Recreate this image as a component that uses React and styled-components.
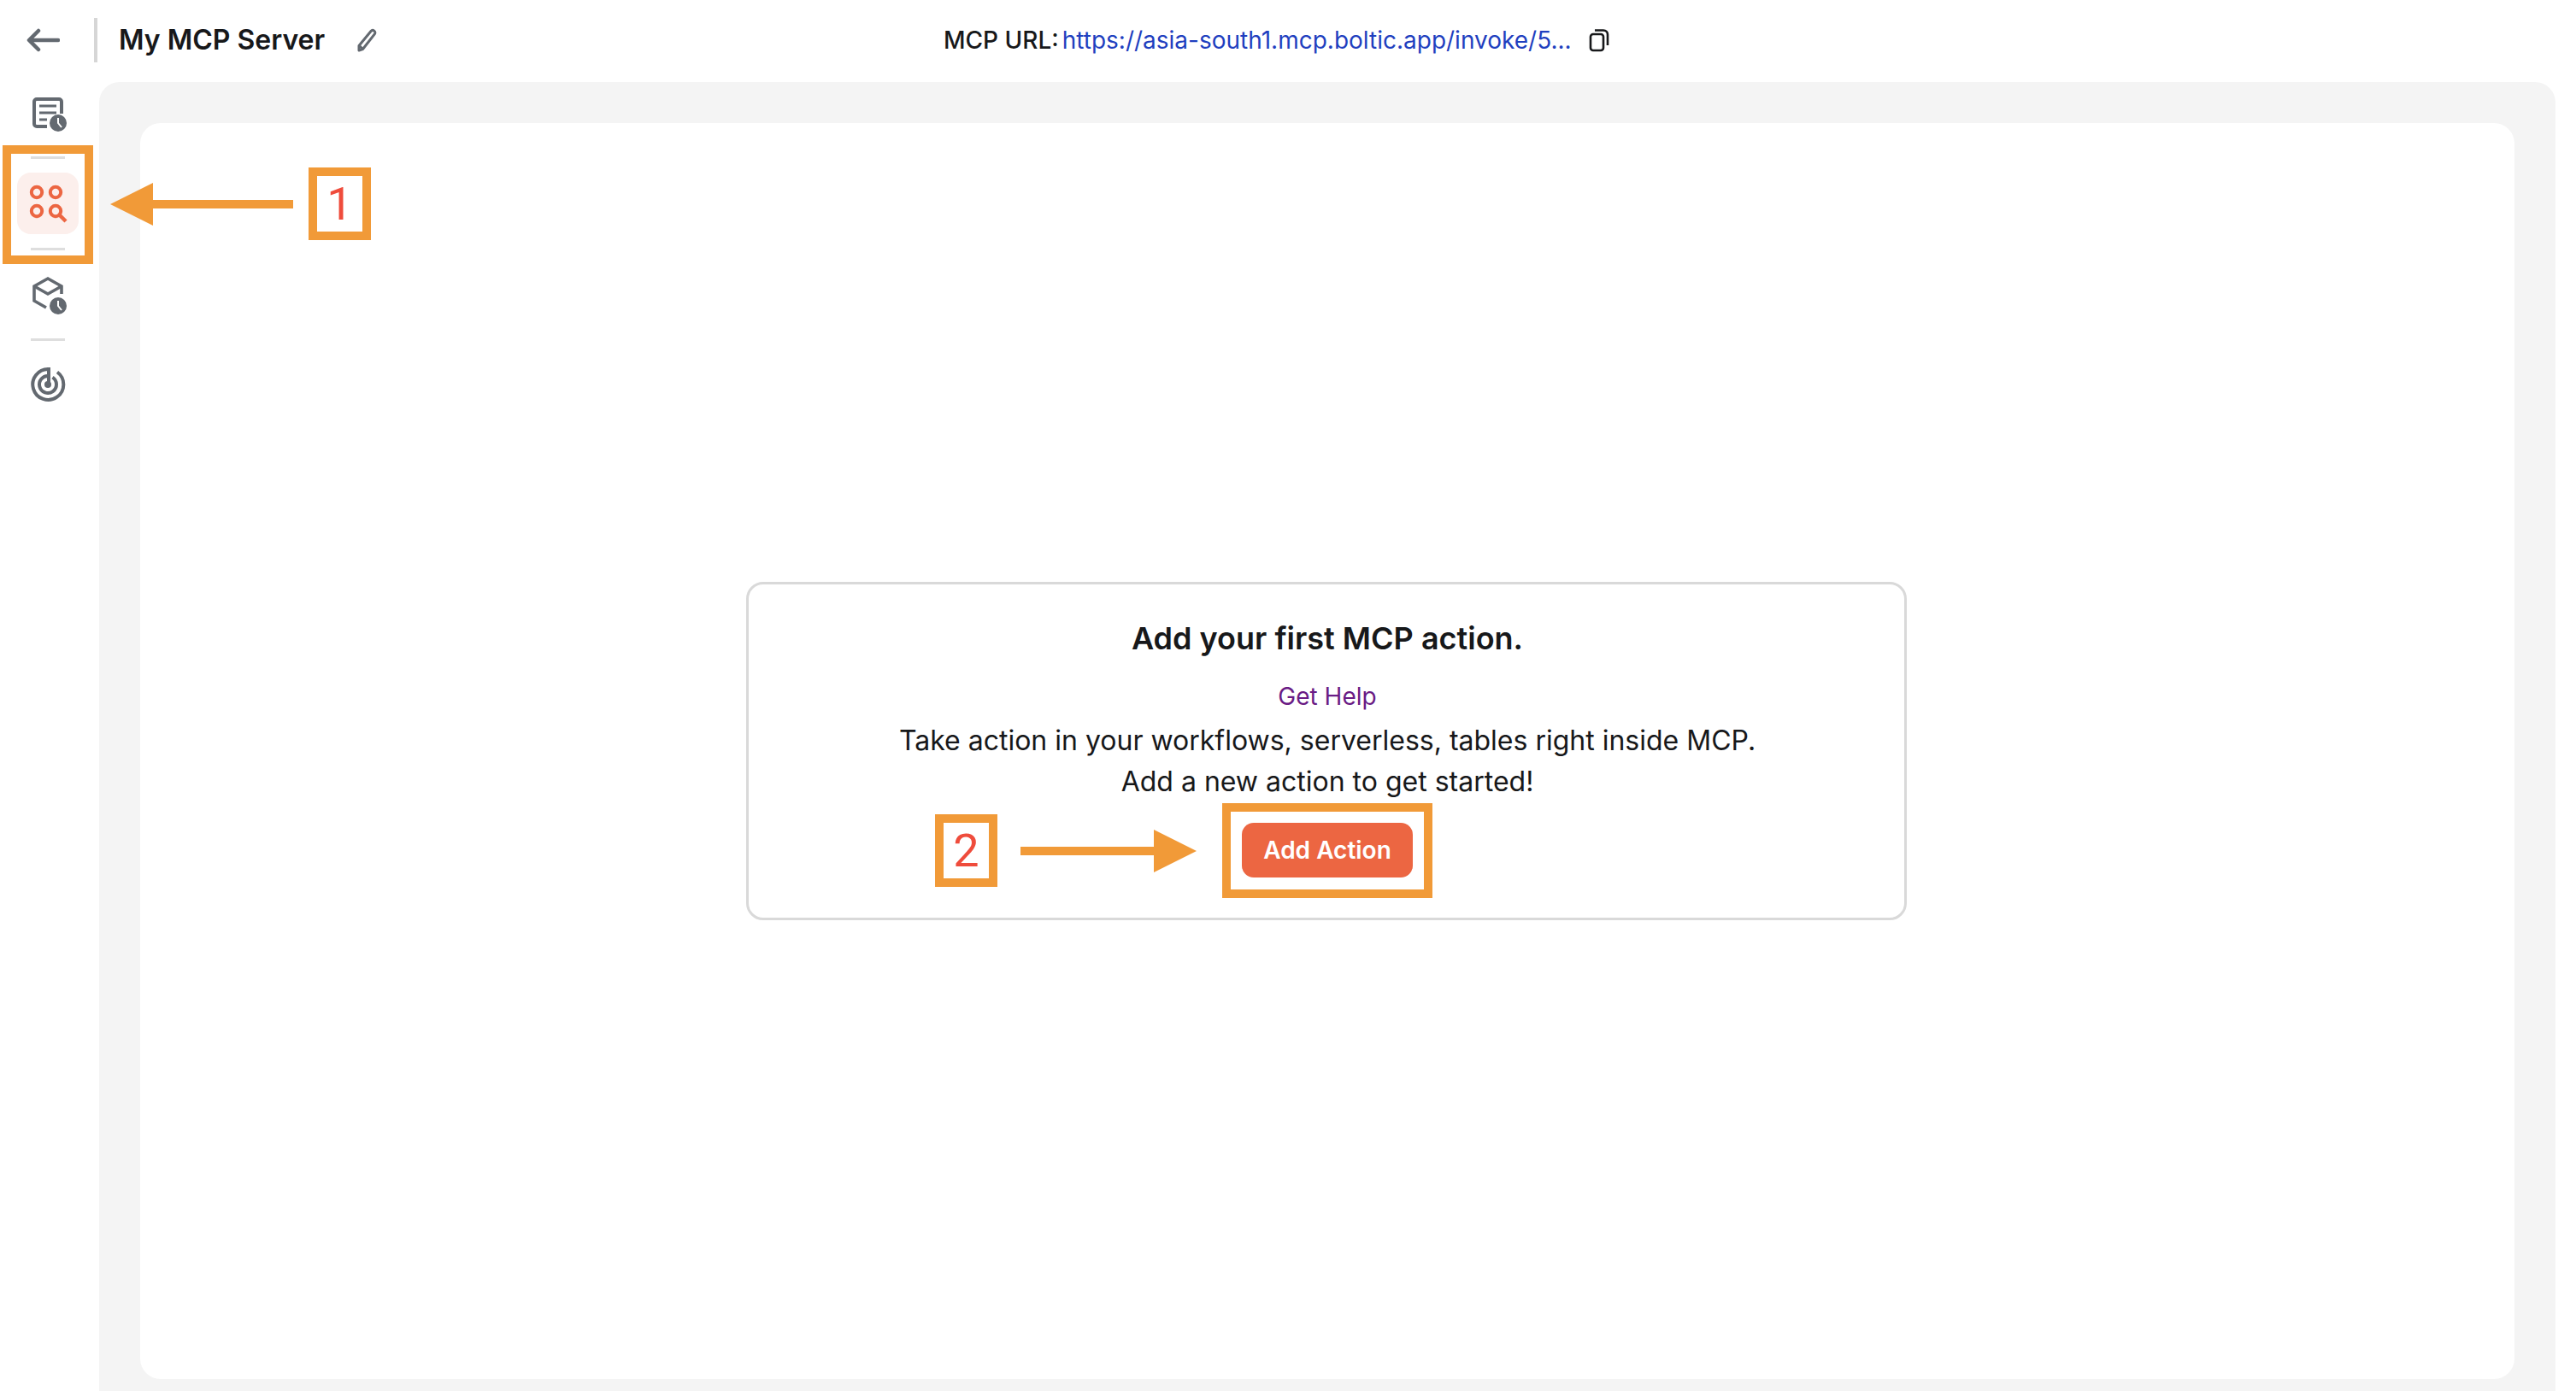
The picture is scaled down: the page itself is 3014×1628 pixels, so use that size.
import React from "react";
import styled, { createGlobalStyle } from "styled-components";

const GREY = "#636970";
const ORANGE = "#f19a38";
const CORAL = "#ec6642";

const GlobalStyle = createGlobalStyle`
  html, body { margin: 0; padding: 0; background: #fff; }
  body { font-family: Inter, "Noto Sans", sans-serif; color: #17181a; }
  * { box-sizing: border-box; }
`;

const Page = styled.div`
  position: relative;
  width: 3014px;
  height: 1628px;
  overflow: hidden;
`;

// top bar
const Header = styled.header`
  display: grid;
  grid-template-columns: 1104px auto;
  align-items: center;
  height: 96px;
  padding-bottom: 3px;
`;

const HeaderLeft = styled.div`
  display: flex;
  align-items: center;
  padding-left: 30px;
`;

const VerticalRule = styled.div`
  width: 4px;
  height: 52px;
  margin-left: 40px;
  background: #d6d6d6;
`;

const Title = styled.h1`
  margin: 0 0 0 25px;
  font-size: 32px;
  line-height: 40px;
  font-weight: 600;
`;

const PencilButton = styled.span`
  display: flex;
  margin-left: 37px;
`;

const UrlRow = styled.div`
  display: flex;
  align-items: center;
  font-size: 28px;
  line-height: 40px;
`;

const UrlLabel = styled.span`
  font-weight: 500;
  margin-right: 4px;
`;

const UrlLink = styled.a`
  color: #1f3fbf;
`;

const CopyButton = styled.span`
  display: flex;
  margin-left: 19px;
`;

// body
const Body = styled.div`
  display: flex;
  height: 1532px;
`;

const Sidebar = styled.nav`
  display: flex;
  flex-direction: column;
  align-items: center;
  flex: 0 0 116px;
  padding: 16px 4px 0 0;
`;

const SideRule = styled.div`
  width: 40px;
  height: 3px;
  margin: ${(p) => p.$top}px 0 ${(p) => p.$bottom}px;
  background: #dedede;
`;

const NavItem = styled.div`
  display: flex;
  align-items: center;
  justify-content: center;
  width: 72px;
  height: ${(p) => p.$height || 48}px;
  border-radius: 16px;
  background: ${(p) => (p.$active ? "#fcefec" : "transparent")};
`;

const Panel = styled.main`
  flex: 1;
  margin-right: 24px;
  padding: 48px 48px 14px;
  background: #f4f4f4;
  border-radius: 24px 24px 0 0;
`;

const Canvas = styled.section`
  display: flex;
  align-items: center;
  justify-content: center;
  height: 100%;
  background: #fff;
  border-radius: 24px;
`;

const EmptyCard = styled.div`
  display: flex;
  flex-direction: column;
  align-items: center;
  width: 1358px;
  height: 396px;
  margin-right: 2px;
  padding: 39px 0 0 2px;
  border: 3px solid #d9d9d9;
  border-radius: 20px;
  text-align: center;
`;

const CardTitle = styled.h2`
  margin: 0;
  font-size: 36px;
  line-height: 48px;
  font-weight: 600;
`;

const HelpLink = styled.a`
  margin-top: 26px;
  color: #6a1b85;
  font-size: 28px;
  line-height: 36px;
`;

const CardText = styled.p`
  margin: 10px 0 0;
  font-size: 32px;
  line-height: 48px;
`;

const AddButton = styled.button`
  width: 200px;
  height: 64px;
  margin-top: 24px;
  border: 0;
  border-radius: 14px;
  background: ${CORAL};
  color: #fff;
  font-family: inherit;
  font-size: 28px;
  font-weight: 600;
`;

// annotations drawn on top of the screenshot
const Frame = styled.div`
  position: absolute;
  left: ${(p) => p.$x}px;
  top: ${(p) => p.$y}px;
  width: ${(p) => p.$w}px;
  height: ${(p) => p.$h}px;
  border: 10px solid ${ORANGE};
  display: flex;
  align-items: center;
  justify-content: center;
  color: #ef4c3c;
  font-family: Roboto, sans-serif;
  font-size: 54px;
  font-weight: 400;
`;

const ArrowSvg = styled.svg`
  position: absolute;
  left: ${(p) => p.$x}px;
  top: ${(p) => p.$y}px;
`;

const BackIcon = () => (
  <svg width="40" height="32" viewBox="0 0 40 32" fill="none" stroke={GREY} strokeWidth="4.5" strokeLinecap="round" strokeLinejoin="round">
    <path d="M38 16H5M15 5L4 16l11 11" />
  </svg>
);

const PencilIcon = () => (
  <svg width="26" height="28" viewBox="0 0 26 28" fill="none" stroke={GREY} strokeWidth="3" strokeLinejoin="round">
    <path d="M3 20.5L17 3.5c1-1.2 2.6-1.3 3.8-.4s1.4 2.6.5 3.8L7.5 24.5 3 26z" />
    <path d="M3.5 20.5l4 4" />
  </svg>
);

const CopyIcon = () => (
  <svg width="26" height="28" viewBox="0 0 26 28" fill="none" stroke="#17181a" strokeWidth="2.6" strokeLinejoin="round">
    <rect x="3" y="7" width="15" height="19" rx="3" />
    <path d="M8 2.5h10c3 0 5 2 5 5V20" />
  </svg>
);

const ClockBadge = ({ cx, cy }) => (
  <>
    <circle cx={cx} cy={cy} r="10" fill={GREY} stroke="none" />
    <path d={`M${cx} ${cy - 6}v6l4 5`} fill="none" stroke="#fff" strokeWidth="2" />
  </>
);

const DocClockIcon = () => (
  <svg width="44" height="44" viewBox="0 0 44 44" fill="none" stroke={GREY}>
    <path d="M21 36H9a3 3 0 0 1-3-3V7a3 3 0 0 1 3-3h26a3 3 0 0 1 3 3v14" strokeWidth="4" />
    <path d="M12 12h20M12 20h20M12 28h9" strokeWidth="3" />
    <ClockBadge cx={34} cy={32} />
  </svg>
);

const ActionsIcon = () => (
  <svg width="48" height="48" viewBox="0 0 48 48" fill="none" stroke={CORAL} strokeWidth="4">
    <circle cx="11" cy="11" r="6.2" />
    <circle cx="33" cy="11" r="6.2" />
    <circle cx="11" cy="33" r="6.2" />
    <circle cx="33" cy="33" r="6.2" />
    <path d="M37.5 37.5L45 45" strokeWidth="4.4" />
  </svg>
);

const BoxClockIcon = () => (
  <svg width="44" height="48" viewBox="0 0 44 48" fill="none" stroke={GREY} strokeWidth="3.6">
    <path d="M20 38L6 30V13L22 4l16 9v9" />
    <path d="M6 13l16 9 16-9" />
    <ClockBadge cx={34} cy={36} />
  </svg>
);

const RadarIcon = () => (
  <svg width="44" height="44" viewBox="0 0 44 44" fill="none" stroke={GREY} strokeWidth="4">
    <path d="M33 7.5A18 18 0 1 1 23 4" />
    <path d="M27.5 13.6A10 10 0 1 1 23 12" />
    <path d="M23 22V2" strokeWidth="4" />
    <circle cx="22" cy="22" r="4" fill={GREY} stroke="none" />
  </svg>
);

export default function App() {
  return (
    <Page>
      <GlobalStyle />
      <Header>
        <HeaderLeft>
          <BackIcon />
          <VerticalRule />
          <Title>My MCP Server</Title>
          <PencilButton>
            <PencilIcon />
          </PencilButton>
        </HeaderLeft>
        <UrlRow>
          <UrlLabel>MCP URL:</UrlLabel>
          <UrlLink>https://asia-south1.mcp.boltic.app/invoke/5...</UrlLink>
          <CopyButton>
            <CopyIcon />
          </CopyButton>
        </UrlRow>
      </Header>

      <Body>
        <Sidebar>
          <NavItem $height={44}>
            <DocClockIcon />
          </NavItem>
          <SideRule $top={27} $bottom={16} />
          <NavItem $active $height={72}>
            <ActionsIcon />
          </NavItem>
          <SideRule $top={16} $bottom={29} />
          <NavItem>
            <BoxClockIcon />
          </NavItem>
          <SideRule $top={26} $bottom={29} />
          <NavItem $height={44}>
            <RadarIcon />
          </NavItem>
        </Sidebar>

        <Panel>
          <Canvas>
            <EmptyCard>
              <CardTitle>Add your first MCP action.</CardTitle>
              <HelpLink>Get Help</HelpLink>
              <CardText>
                Take action in your workflows, serverless, tables right inside MCP.
                <br />
                Add a new action to get started!
              </CardText>
              <AddButton>Add Action</AddButton>
            </EmptyCard>
          </Canvas>
        </Panel>
      </Body>

      <Frame $x={3} $y={170} $w={106} $h={139} />
      <ArrowSvg $x={129} $y={214} width="214" height="50" viewBox="0 0 214 50">
        <polygon points="0,25 50,0 50,20 214,20 214,30 50,30 50,50" fill={ORANGE} />
      </ArrowSvg>
      <Frame $x={361} $y={196} $w={73} $h={85}>1</Frame>

      <Frame $x={1094} $y={953} $w={73} $h={85}>2</Frame>
      <ArrowSvg $x={1194} $y={971} width="206" height="50" viewBox="0 0 206 50">
        <polygon points="206,25 156,0 156,20 0,20 0,30 156,30 156,50" fill={ORANGE} />
      </ArrowSvg>
      <Frame $x={1430} $y={940} $w={246} $h={111} />
    </Page>
  );
}
